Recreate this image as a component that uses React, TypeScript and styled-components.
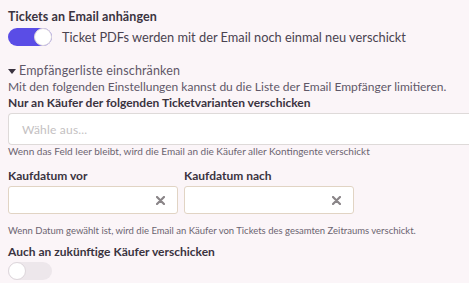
import React, { useState } from "react";
import styled, { createGlobalStyle } from "styled-components";

const GlobalStyle = createGlobalStyle`
  html, body {
    margin: 0;
    padding: 0;
    background: #fbf5f8;
    overflow: hidden;
  }
  body {
    font-family: Lato, "Noto Sans", sans-serif;
    color: #3b3440;
  }
`;

const Page = styled.div`
  width: 469px;
  height: 283px;
  padding: 9px 0 0 8px;
  box-sizing: border-box;
  overflow: hidden;
`;

const Label = styled.div<{ $mt?: number; $wide?: boolean }>`
  font-size: ${({ $wide }) => ($wide ? "12.5px" : "12px")};
  letter-spacing: ${({ $wide }) => ($wide ? "0.1px" : "0")};
  font-weight: bold;
  color: #3a3340;
  line-height: 16px;
  margin-top: ${({ $mt }) => $mt || 0}px;
`;

const SwitchRow = styled.label<{ $mt?: number }>`
  display: flex;
  align-items: center;
  gap: 10px;
  height: 18px;
  margin-top: ${({ $mt }) => $mt || 0}px;
  font-size: 12.8px;
  color: #4a4350;
`;

const Track = styled.span<{ $on: boolean }>`
  position: relative;
  display: inline-block;
  width: 44px;
  height: 18px;
  border-radius: 9px;
  background: ${({ $on }) => ($on ? "#5a4de6" : "#ede7eb")};
  flex-shrink: 0;
`;

const Knob = styled.span<{ $on: boolean }>`
  position: absolute;
  top: 0;
  left: ${({ $on }) => ($on ? "26px" : "0")};
  width: 18px;
  height: 18px;
  border-radius: 50%;
  background: #ffffff;
  box-sizing: border-box;
  border: 1px solid #ddd6db;
`;

const Details = styled.div`
  margin-top: 17px;
`;

const Summary = styled.div`
  display: flex;
  align-items: center;
  gap: 3px;
  font-size: 12.5px;
  letter-spacing: 0.15px;
  color: #5f5868;
  line-height: 16px;
`;

const Caret = styled.span`
  width: 0;
  height: 0;
  border-left: 4px solid transparent;
  border-right: 4px solid transparent;
  border-top: 5px solid #3a3340;
`;

const Intro = styled.div`
  font-size: 12px;
  color: #5f5868;
  line-height: 15px;
`;

const Select = styled.div`
  margin-top: 2px;
  width: 480px;
  height: 32px;
  background: #ffffff;
  border: 1px solid #dedad9;
  border-right: none;
  border-radius: 4px 0 0 4px;
  box-sizing: border-box;
  display: flex;
  align-items: center;
  padding-left: 13px;
  font-size: 12px;
  letter-spacing: 0.2px;
  color: #c4bfc2;
`;

const Hint = styled.div<{ $mt?: number; $small?: boolean }>`
  font-size: ${({ $small }) => ($small ? "9.5px" : "10px")};
  color: #6b6470;
  line-height: 13px;
  margin-top: ${({ $mt }) => $mt || 0}px;
`;

const DateGrid = styled.div`
  display: grid;
  grid-template-columns: 170px 170px;
  column-gap: 6px;
  margin-top: 10px;
`;

const DateField = styled.div`
  display: flex;
  flex-direction: column;
  gap: 2px;
`;

const DateInput = styled.div`
  height: 28px;
  background: #ffffff;
  border: 1px solid #e1d4c4;
  border-radius: 3px;
  box-sizing: border-box;
  display: flex;
  align-items: center;
  justify-content: flex-end;
  padding-right: 12px;
`;

const ClearIcon = () => (
  <svg width="9" height="9" viewBox="0 0 9 9">
    <path d="M1 1 L8 8 M8 1 L1 8" stroke="#8a8588" strokeWidth="2.2" strokeLinecap="round" />
  </svg>
);

function Toggle({ on, onClick }: { on: boolean; onClick: () => void }) {
  return (
    <Track $on={on} onClick={onClick}>
      <Knob $on={on} />
    </Track>
  );
}

export default function App() {
  const [attach, setAttach] = useState(true);
  const [future, setFuture] = useState(false);

  return (
    <Page>
      <GlobalStyle />
      <Label $wide>Tickets an Email anhängen</Label>
      <SwitchRow $mt={3}>
        <Toggle on={attach} onClick={() => setAttach(!attach)} />
        Ticket PDFs werden mit der Email noch einmal neu verschickt
      </SwitchRow>

      <Details>
        <Summary>
          <Caret />
          Empfängerliste einschränken
        </Summary>
        <Intro>Mit den folgenden Einstellungen kannst du die Liste der Email Empfänger limitieren.</Intro>

        <Label $mt={1}>Nur an Käufer der folgenden Ticketvarianten verschicken</Label>
        <Select>Wähle aus...</Select>
        <Hint>Wenn das Feld leer bleibt, wird die Email an die Käufer aller Kontingente verschickt</Hint>

        <DateGrid>
          <DateField>
            <Label>Kaufdatum vor</Label>
            <DateInput>
              <ClearIcon />
            </DateInput>
          </DateField>
          <DateField>
            <Label>Kaufdatum nach</Label>
            <DateInput>
              <ClearIcon />
            </DateInput>
          </DateField>
        </DateGrid>
        <Hint $mt={10} $small>
          Wenn Datum gewählt ist, wird die Email an Käufer von Tickets des gesamten Zeitraums verschickt.
        </Hint>

        <Label $mt={7}>Auch an zukünftige Käufer verschicken</Label>
        <SwitchRow $mt={2}>
          <Toggle on={future} onClick={() => setFuture(!future)} />
        </SwitchRow>
      </Details>
    </Page>
  );
}
